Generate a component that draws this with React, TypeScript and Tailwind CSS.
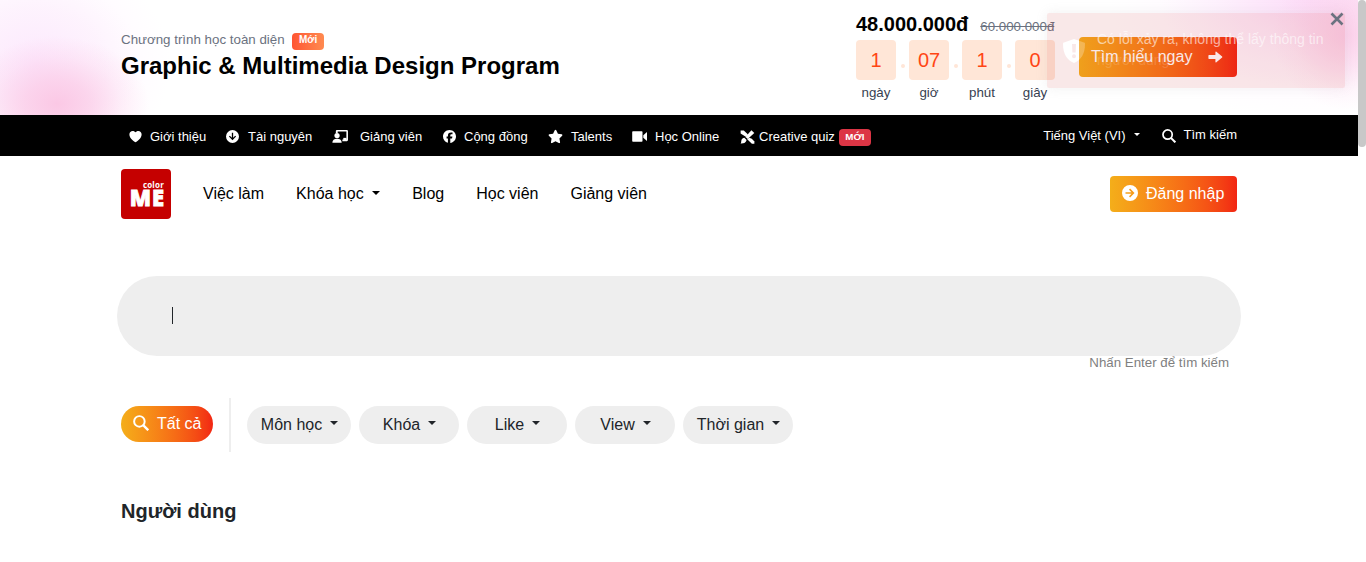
import React from "react";
import { FaFacebook, FaStar } from "react-icons/fa6";
import { IoHeart } from "react-icons/io5";

const Caret = ({ small = false, className = "" }: { small?: boolean; className?: string }) => (
  <svg viewBox="0 0 10 5" className={`${small ? "h-[3px] w-1.5" : "h-1 w-2"} ml-2 ${className}`}>
    <path d="M0 0h10L5 5z" fill="currentColor" />
  </svg>
);

const SearchIcon = ({ className }: { className: string }) => (
  <svg viewBox="0 0 17 17" className={className} fill="none" stroke="currentColor" strokeWidth="2.100">
    <circle cx="6.800" cy="6.800" r="5.600" />
    <path d="M10.800 10.800l5.400 5.400" strokeWidth="2.500" />
  </svg>
);

const CircleArrow = ({ className }: { className: string }) => (
  <svg viewBox="0 0 16 16" className={className}>
    <path
      fill="currentColor"
      fillRule="evenodd"
      d="M8 0a8 8 0 1 1 0 16A8 8 0 0 1 8 0zM3.500 7.200v1.600h6L7 11.300 8.100 12.400 12.500 8 8.100 3.600 7 4.700l2.500 2.500z"
    />
  </svg>
);

const BoldArrow = () => (
  <svg viewBox="0 0 15 12" className="-mt-px h-3 w-[15px] shrink-0" fill="currentColor" stroke="currentColor" strokeLinejoin="round">
    <path d="M1 4.700h7V1.200L13.700 6 8 10.800V7.300H1z" strokeWidth="1.200" />
  </svg>
);

const QuizIcon = () => (
  <svg viewBox="0 0 15 14" className="h-3.5 w-[15px]" fill="currentColor">
    <path d="M.6.6h3.200l3.200 3 1 1.200-2.200 2L.6 3.400z" />
    <path d="M9.200 7.800l2.600 1 2.600 2.600v2.300h-2.500L9 11 7.200 9.300z" />
    <path d="M11.400.2l2.900 2.700-6.600 6L5.400 7.100z" />
    <path d="M4.300 7.800l2.300 2.300C6 12.600 4 13.800.6 13.600c.9-1 .4-2 .9-3.500.5-1.400 1.500-2.200 2.800-2.300z" />
  </svg>
);

const TeacherIcon = () => (
  <svg viewBox="0 0 18 15" className="-mt-0.5 ml-px h-3.5 w-[17px]" fill="currentColor">
    <path d="M4 2.200Q4 1 5.200 1h10.600Q17 1 17 2.200v9.600q0 1.200-1.200 1.200H11v-1.800h4.300V2.800H6v1.400H4z" />
    <circle cx="5.300" cy="7" r="2.800" />
    <path d="M.3 14.800c0-3.100 1.800-4.400 5-4.400s5 1.300 5 4.400z" />
    <path d="M12 9.500h3.500V12H12z" />
  </svg>
);

const VideoIcon = () => (
  <svg viewBox="0 0 16 11" className="-mt-px h-[11px] w-4" fill="currentColor">
    <path d="M1 .3h8.700q.8 0 .8.800v8.800q0 .8-.8.8H1q-.8 0-.8-.8V1.100Q.2.300 1 .3zM11.300 4.200 15 1v9l-3.700-3.200z" />
  </svg>
);

const topLinks = [
  { label: "Giới thiệu", icon: <IoHeart size={15} />, pos: "w-[98px]", gap: "gap-[7px]" },
  { label: "Tài nguyên", icon: <CircleArrow className="h-[13px] w-[13px] rotate-90" />, pos: "w-[105px]", gap: "gap-[9px]" },
  { label: "Giảng viên", icon: <TeacherIcon />, pos: "w-[112px]", gap: "gap-[11px]" },
  { label: "Cộng đồng", icon: <FaFacebook size={13} />, pos: "w-[105px]", gap: "gap-2" },
  { label: "Talents", icon: <FaStar size={15} />, pos: "w-[84px]", gap: "gap-2" },
  { label: "Học Online", icon: <VideoIcon />, pos: "w-[108px]", gap: "gap-[7px]" },
  { label: "Creative quiz", icon: <QuizIcon />, pos: "", gap: "gap-1" },
];

const countdown = [
  ["1", "ngày"],
  ["07", "giờ"],
  ["1", "phút"],
  ["0", "giây"],
];

const filters = [
  { label: "Môn học", width: "w-[104px]" },
  { label: "Khóa", width: "w-[100px]" },
  { label: "Like", width: "w-[100px]" },
  { label: "View", width: "w-[100px]" },
  { label: "Thời gian", width: "w-[110px]" },
];

const Promo = () => (
  <section className="relative h-[115px] overflow-hidden bg-white">
    <div className="absolute -left-[100px] -top-[50px] h-[230px] w-[270px] bg-[radial-gradient(closest-side,#fce8fd_0%,#fdeffdc0_50%,#fff5ff50_78%,#ffffff00_100%)]" />
    <div className="absolute -left-[35px] top-[36px] h-[136px] w-[184px] bg-[radial-gradient(closest-side,#fbc8e5_0%,#fbc8e5b0_35%,#fbc8e540_70%,#fbc8e500_100%)]" />
    <div className="absolute -right-[150px] -top-[130px] h-[250px] w-[400px] bg-[radial-gradient(closest-side,#fcdcf8_0%,#fdeafcb0_45%,#fff5ff50_75%,#ffffff00_100%)]" />
    <div className="absolute -right-[65px] -top-[40px] h-[150px] w-[150px] bg-[radial-gradient(closest-side,#fbc8e5c0_0%,#fbc8e570_40%,#fbc8e520_75%,#fbc8e500_100%)]" />
    <div className="relative mx-auto flex h-full w-[1116px] justify-between">
      <div className="pt-[30px]">
        <div className="flex items-center leading-[18px] text-[#6b7280]">
          <span className="text-[13.330px]">Chương trình học toàn diện</span>
          <span className="ml-[7.500px] mt-[3px] flex h-[17px] w-8 items-center justify-center rounded bg-linear-to-r from-[#ff5433] to-[#ff8a50] pb-[3px] text-[10px] font-bold text-white">Mới</span>
        </div>
        <h1 className="text-2xl font-bold leading-[32px] text-black">Graphic &amp; Multimedia Design Program</h1>
      </div>
      <div className="flex w-[381px] justify-between">
        <div className="w-[200px] pt-2.5">
          <div className="flex items-baseline whitespace-nowrap">
            <b className="text-xl leading-[28px] text-black">48.000.000đ</b>
            <s className="ml-3 text-[13.300px] text-[#6b7280]">60.000.000đ</s>
          </div>
          <div className="mt-0.5 flex gap-[13px]">
            {countdown.map(([n, unit], i) => (
              <div key={unit} className="relative w-10 shrink-0 text-center">
                <div className="flex h-10 items-center justify-center rounded bg-[#ffe6d7] text-xl text-[#ff4514]">{n}</div>
                <div className="mt-[3px] text-[13.330px] leading-5 text-[#374151]">{unit}</div>
                {i < 3 && <span className="absolute left-[45px] top-6 h-1 w-1 rounded-full bg-[#ffe6d7]" />}
              </div>
            ))}
          </div>
        </div>
        <button className="mt-[37px] flex h-10 w-[158px] items-center justify-between rounded bg-linear-to-r from-[#f4ae1a] to-[#f22513] pl-3 pr-3.5 text-base text-white">
          Tìm hiểu ngay <BoldArrow />
        </button>
      </div>
    </div>
    <div className="absolute left-[1047px] top-[13px] flex h-[75px] w-[298px] rounded-xs bg-[#c8302c]/11 pl-[50px] pt-4 text-[14px] leading-[21px] text-white/60 shadow-[0_0_12px_rgba(153,153,153,0.14)]">
      <svg viewBox="0 0 22 24" className="absolute left-4 top-[26px] h-6 w-[22px]">
        <linearGradient id="shield">
          <stop offset=".72" stopColor="#fff" />
          <stop offset=".74" stopColor="#fff" stopOpacity=".25" />
        </linearGradient>
        <path
          fill="url(#shield)"
          fillRule="evenodd"
          d="M11 0 21 3.500q1 0 1 1.200C22 15 18 21 11 24 4 21 0 15 0 4.700q0-1.200 1-1.200zM9 5l.4 8.500h3.200L13 5zm2 10.300a2 2 0 1 0 0 4 2 2 0 0 0 0-4z"
        />
      </svg>
      <p>
        Có lỗi xảy ra, không thể lấy thông tin
        <br />
        <span className="opacity-25">người dùng</span>
      </p>
    </div>
    <svg viewBox="0 0 14 14" className="absolute left-[1330px] top-3 h-3.5 w-3.5" stroke="#6b7280" strokeWidth="2.600">
      <path d="M1.500 1.500l11 11M12.500 1.500l-11 11" />
    </svg>
  </section>
);

export default function App() {
  return (
    <div className="flex h-[562px] w-[1366px] overflow-hidden bg-white font-['Liberation_Sans',sans-serif] text-[#212529]">
      <main className="w-[1358px]">
        <Promo />
        <nav className="h-[41px] bg-black text-[13px] text-white">
          <div className="mx-auto flex h-full w-[1116px] justify-between">
            <div className="flex items-center pl-[7px] pt-0.5">
              {topLinks.map((l) => (
                <a key={l.label} className={`flex shrink-0 items-center whitespace-nowrap ${l.pos} ${l.gap}`}>
                  {l.icon}
                  <span>{l.label}</span>
                </a>
              ))}
              <span className="ml-1 mt-0.5 flex h-[17px] w-8 items-center justify-center rounded bg-[#dc3545] text-[9.750px] font-bold">MỚI</span>
            </div>
            <div className="flex items-center">
              <span>Tiếng Việt (VI)</span>
              <Caret small className="-mt-0.5" />
              <SearchIcon className="ml-[22px] mr-2 h-3.5 w-3.5" />
              <span className="-mt-0.5">Tìm kiếm</span>
            </div>
          </div>
        </nav>
        <header className="mx-auto flex h-[76px] w-[1116px] items-center justify-between text-base text-black">
          <div className="flex items-center">
            <div className="flex h-[50px] w-[50px] flex-col items-end rounded bg-[#c50000] pr-[7px] pt-3 font-['Open_Sans',sans-serif] font-bold text-white">
              <span className="text-[8px] leading-[8px] tracking-[0.2px]">color</span>
              <span className="text-[22px] font-extrabold leading-[17px] tracking-[1px] -mr-px [-webkit-text-stroke:0.8px_white]">ME</span>
            </div>
            <a className="ml-8">Việc làm</a>
            <a className="ml-8 flex items-center">Khóa học <Caret className="-mt-[3px]" /></a>
            <a className="ml-[32.500px]">Blog</a>
            <a className="ml-8">Học viên</a>
            <a className="ml-8">Giảng viên</a>
          </div>
          <button className="flex h-9 w-[127px] items-center gap-2 rounded bg-linear-to-r from-[#f4ae1a] to-[#f22513] pl-3 text-white">
            <CircleArrow className="-mt-0.5 h-4 w-4" /> Đăng nhập
          </button>
        </header>
        <section className="mx-auto w-[1124px] pt-11">
          <div className="flex h-20 items-center rounded-[40px] bg-[#eee] pb-0.5 pl-[55px]">
            <span className="h-[17px] w-px bg-[#212529]" />
          </div>
          <p className="-mt-0.5 pr-3 text-right text-[13.300px] leading-[18px] text-[#808080]">Nhấn Enter để tìm kiếm</p>
        </section>
        <section className="mx-auto w-[1116px]">
          <div className="mt-[26px] flex h-[54px]">
            <button className="mt-2 flex h-9 w-[92px] items-center gap-2 rounded-full bg-linear-to-r from-[#f4ae1a] to-[#f22513] pl-3 text-white">
              <SearchIcon className="-mt-0.5 h-4 w-4" /> Tất cả
            </button>
            <span className="ml-4 w-0.5 bg-[#eee]" />
            <div className="ml-4 flex gap-2 pt-2">
              {filters.map((f) => (
                <button key={f.label} className={`flex h-[38px] items-center justify-center rounded-full bg-[#eee] pl-px ${f.width}`}>
                  {f.label} <Caret className="-mt-1" />
                </button>
              ))}
            </div>
          </div>
          <h2 className="mt-[47px] text-xl font-bold leading-6">Người dùng</h2>
        </section>
      </main>
      <aside className="w-2 bg-white">
        <div className="h-[147px] rounded-full bg-[#c8c8c8]" />
      </aside>
    </div>
  );
}
